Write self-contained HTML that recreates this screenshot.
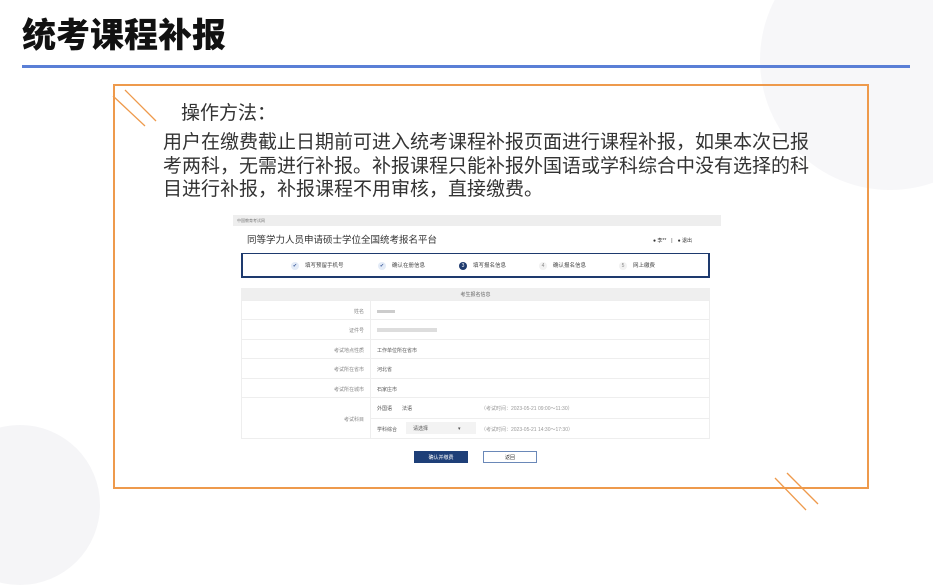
<!DOCTYPE html>
<html><head><meta charset="utf-8">
<style>
*{margin:0;padding:0;box-sizing:border-box}
body{width:933px;height:525px;position:relative;overflow:hidden;background:#fff;font-family:"Liberation Sans","Noto Sans CJK SC",sans-serif}
.abs{position:absolute}
.title{left:22px;top:8px;font-size:34px;font-weight:900;color:#111}
.hr{left:22px;top:65px;width:888px;height:3px;background:#5a7fd6}
.box{left:113px;top:84px;width:756px;height:405px;border:2px solid #ee9a4c}
.h{left:181px;top:98px;font-size:19px;color:#333}
.p{left:163px;top:131px;width:660px;font-size:19px;line-height:23.5px;color:#333}
.sc{left:233px;top:215px;width:488px;height:252px;background:#fff;font-size:5px;color:#555}
.row{position:absolute;left:8px;width:469px;border-top:1px solid #eee;height:20px}
.lab{position:absolute;left:0;width:129px;text-align:right;padding-right:6px;top:7px;color:#888}
.val{position:absolute;left:136px;top:7px;color:#555}
.st{position:absolute;top:46px;font-size:5.5px;color:#444;white-space:nowrap}
.ci{display:inline-block;width:8px;height:8px;border-radius:50%;background:#e3ebf7;color:#3a5a9a;text-align:center;line-height:8px;font-size:5px;margin-right:6px;vertical-align:middle}
</style></head><body>
<div class="abs" style="left:760px;top:-70px;width:260px;height:260px;border-radius:50%;background:#f7f7f9"></div>
<div class="abs" style="left:-60px;top:425px;width:160px;height:160px;border-radius:50%;background:#f5f5f7"></div>
<div class="abs title">统考课程补报</div>
<div class="abs hr"></div>
<div class="abs box"></div>
<svg class="abs" style="left:0;top:0" width="933" height="525">
<g stroke="#ee9a4c" stroke-width="1.3">
<line x1="113" y1="96" x2="145" y2="126"/><line x1="125" y1="90" x2="156" y2="121"/>
<line x1="775" y1="478" x2="806" y2="510"/><line x1="787" y1="473" x2="818" y2="504"/>
</g></svg>
<div class="abs h">操作方法：</div>
<div class="abs p">用户在缴费截止日期前可进入统考课程补报页面进行课程补报，如果本次已报考两科，无需进行补报。补报课程只能补报外国语或学科综合中没有选择的科目进行补报，补报课程不用审核，直接缴费。</div>
<div class="abs sc">
 <div class="abs" style="left:0;top:0;width:488px;height:11px;background:#eee;padding:3px 4px;color:#777;font-size:4px">中国教育考试网</div>
 <div class="abs" style="left:14px;top:17px;font-size:9.5px;color:#333">同等学力人员申请硕士学位全国统考报名平台</div>
 <div class="abs" style="left:420px;top:22px;font-size:5px;color:#333">● 李**　|　● 退出</div>
 <div class="abs" style="left:8px;top:38px;width:469px;height:25px;border:2px solid #1e3a6e;border-top-width:1px"></div>
 <div class="st" style="left:58px"><span class="ci">✔</span>填写预留手机号</div>
 <div class="st" style="left:145px"><span class="ci">✔</span>确认在册信息</div>
 <div class="st" style="left:226px"><span class="ci" style="background:#1e3a6e;color:#fff">3</span>填写报名信息</div>
 <div class="st" style="left:306px"><span class="ci" style="background:#f2f2f2;color:#888">4</span>确认报名信息</div>
 <div class="st" style="left:386px"><span class="ci" style="background:#f2f2f2;color:#888">5</span>网上缴费</div>
 <div class="abs" style="left:8px;top:73px;width:469px;height:12px;background:#efefef;text-align:center;padding-top:3px;color:#666">考生报名信息</div>
 <div class="abs" style="left:8px;top:85px;width:469px;height:139px;border:1px solid #eee"></div>
 <div class="abs" style="left:137px;top:85px;width:1px;height:139px;background:#eee"></div>
 <div class="row" style="top:85px"><span class="lab">姓名</span><span class="val" style="top:9px;width:18px;height:3px;background:#ccc"></span></div>
 <div class="row" style="top:104px"><span class="lab">证件号</span><span class="val" style="top:8px;width:60px;height:4px;background:#ddd"></span></div>
 <div class="row" style="top:124px"><span class="lab">考试地点性质</span><span class="val">工作单位所在省市</span></div>
 <div class="row" style="top:143px"><span class="lab">考试所在省市</span><span class="val">河北省</span></div>
 <div class="row" style="top:163px"><span class="lab">考试所在城市</span><span class="val">石家庄市</span></div>
 <div class="row" style="top:182px;height:42px"><span class="lab" style="top:18px">考试科目</span>
  <span class="val">外国语　　法语</span><span class="val" style="left:240px;color:#999">（考试时间：2023-05-21 09:00～11:30）</span>
  <span class="abs" style="left:129px;top:20px;width:340px;height:1px;background:#eee"></span>
  <span class="val" style="top:28px">学科综合</span>
  <span class="abs" style="left:165px;top:24px;width:70px;height:12px;background:#f3f3f3;padding:3px 7px">请选择　　　　　　▾</span>
  <span class="val" style="left:240px;top:28px;color:#999">（考试时间：2023-05-21 14:30～17:30）</span></div>
 <div class="abs" style="left:181px;top:236px;width:54px;height:12px;background:#1e3f78;color:#fff;text-align:center;padding-top:3px">确认并缴费</div>
 <div class="abs" style="left:250px;top:236px;width:54px;height:12px;border:1px solid #6a88b8;color:#333;text-align:center;padding-top:2px">返回</div>
</div>
</body></html>
